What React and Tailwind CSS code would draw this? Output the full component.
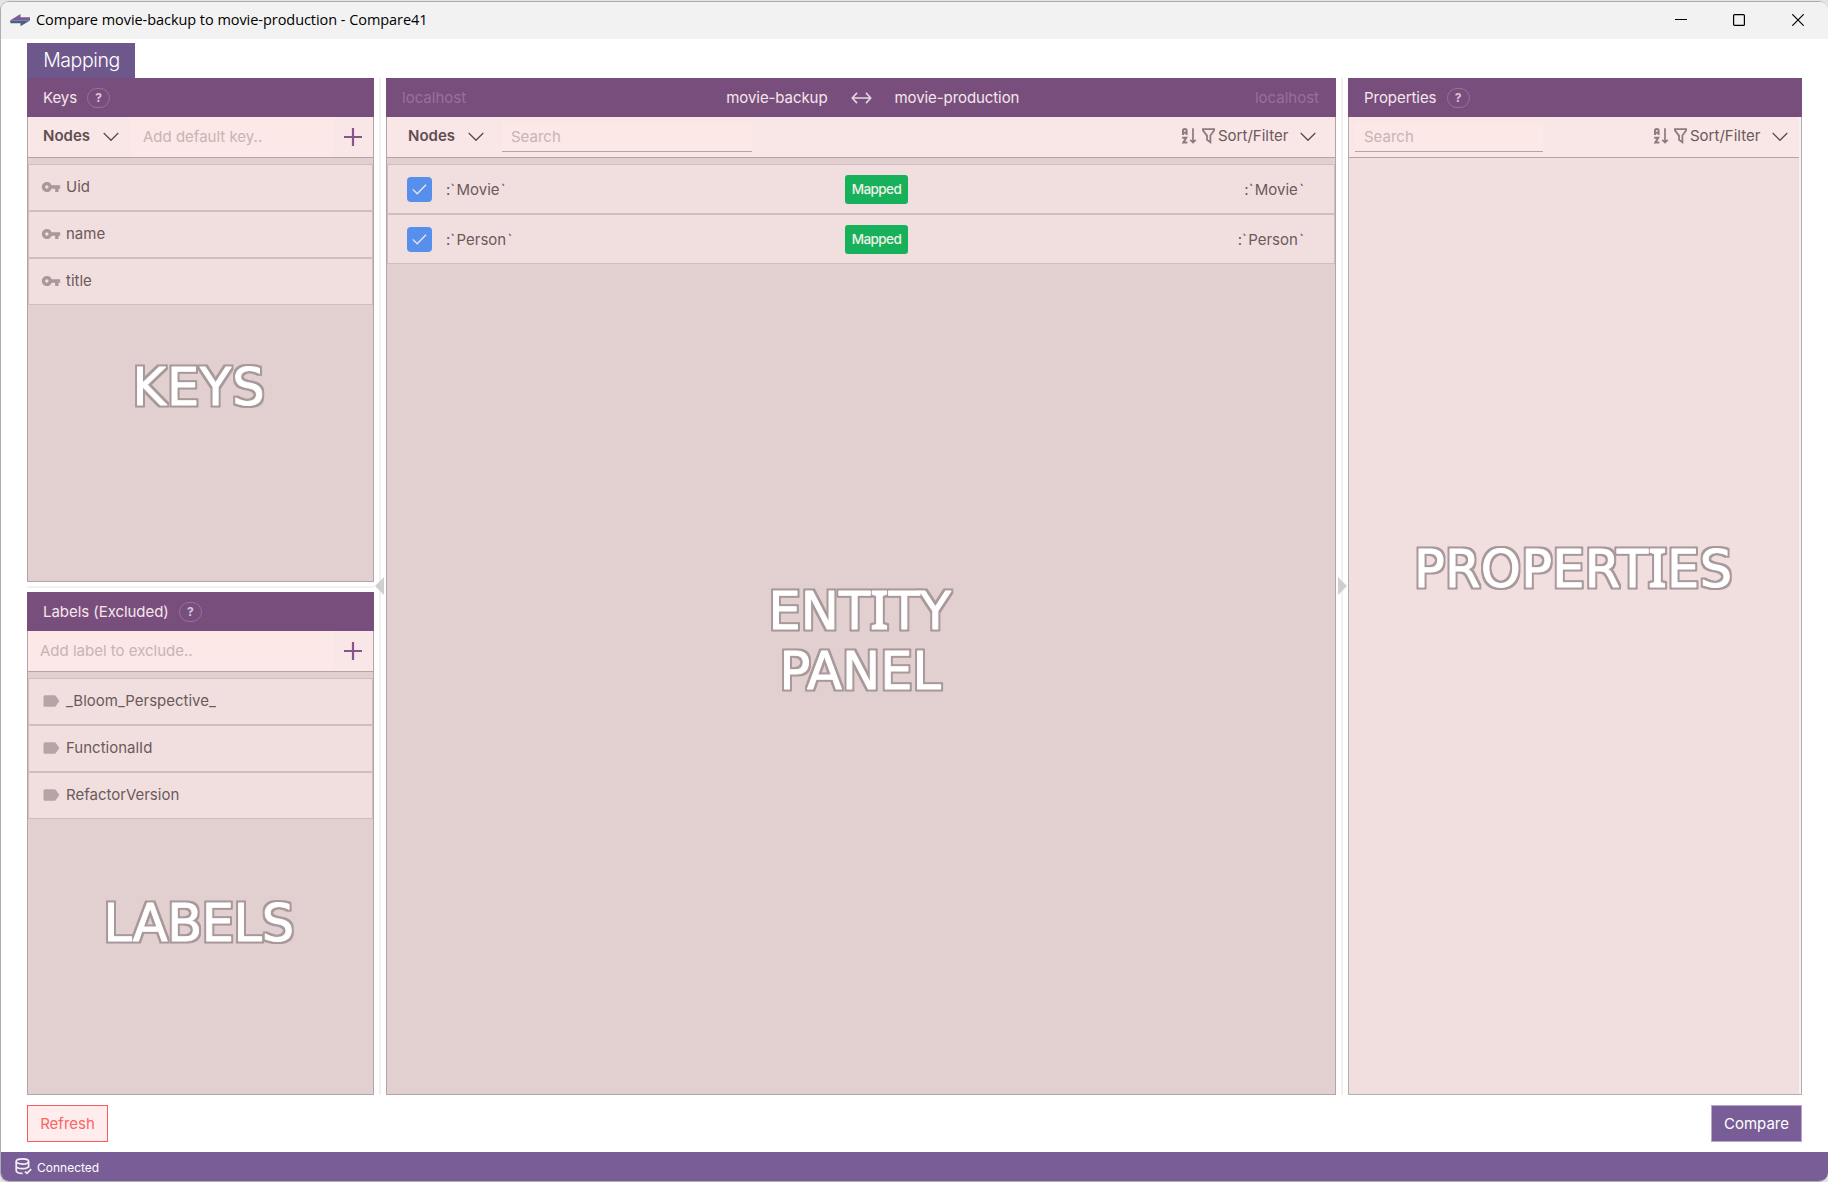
import React from "react";
import { MdVpnKey, MdLabel } from "react-icons/md";

const Chevron = ({ className = "" }) => (
  <svg className={"shrink-0 " + className} width="16" height="10" viewBox="0 0 16 10" fill="none" stroke="#5d4c4e" strokeWidth="1.3">
    <path d="M0.7 1 L8 8.3 L15.3 1" />
  </svg>
);

const Plus = () => (
  <svg width="18" height="18" viewBox="0 0 18 18" fill="none" stroke="#84568c" strokeWidth="2.2">
    <path d="M9 0V18M0 9H18" />
  </svg>
);

const SortIcon = () => (
  <svg width="15" height="16" viewBox="0 0 15 16" fill="none" stroke="#8d7c7e" strokeWidth="2">
    <path d="M1 7V2.6Q1 1 2.800 1T4.600 2.6V7M1 4.800H4.600" />
    <path d="M0.2 9.800H4.200L1.200 14.600H5.400" />
    <path d="M11 0.3V14M8.3 11.900L11 14.600L13.700 11.900" strokeWidth="1.7" />
  </svg>
);

const FunnelIcon = () => (
  <svg width="13" height="16" viewBox="0 0 13 16" fill="none" stroke="#8d7c7e" strokeWidth="1.8">
    <path d="M0.9 1.2H12.1V2.4L8.4 7.6V14.2L5 11.8V7.6L0.9 2.4Z" />
  </svg>
);

const DbIcon = () => (
  <svg width="17" height="17" viewBox="0 0 17 17" fill="none" stroke="#f3eef7" strokeWidth="1.7">
    <ellipse cx="7.4" cy="3.5" rx="6.2" ry="2.6" />
    <path d="M1.2 3.5V12.6C1.2 14.4 3.8 15.4 7.6 15.3M13.6 3.5V9.8M1.2 8C1.2 9.8 4 10.6 7.4 10.6S13.6 9.8 13.6 8" />
    <path d="M10 13.6L12 15.4L16.2 11.2" />
  </svg>
);

const Logo = () => (
  <svg width="20" height="13" viewBox="0 0 20 13">
    <path d="M0 6.500L10.500 0V3.200H20V6.500Z" fill="#775c98" />
    <path d="M0 6.500H20L10.500 12.300V9.300H0.500Z" fill="#4d5f80" />
  </svg>
);

const Help = ({ className = "" }) => (
  <span className={"flex h-5 w-[23px] items-center justify-center rounded-[10px] border border-[#96719c] text-[12px] font-bold text-[#dcc6d8] " + className}>?</span>
);

const Header = ({ title }) => (
  <div className="flex h-[39px] shrink-0 items-center bg-[#784f7c] pl-4 text-[15px] text-[#f6e6ec]">
    <span className="mt-[2px] tracking-[-0.050px]">{title}</span>
    <Help className="ml-[10px]" />
  </div>
);

const SortFilter = ({ className = "" }) => (
  <div className={"flex items-center pb-[2px] text-[#6b595b] " + className}>
    <SortIcon />
    <span className="ml-[5px]"><FunnelIcon /></span>
    <span className="ml-[3px] w-[71px] whitespace-nowrap">Sort/Filter</span>
    <Chevron className="ml-[11px] mt-[1px]" />
  </div>
);

// The capital I is set in a face that gives it serifs.
const Caption = ({ text }) =>
  text.split("I").map((part, i) => (
    <React.Fragment key={i}>
      {i > 0 && <tspan className="font-['Noto_Sans',sans-serif] text-[52px] font-medium">I</tspan>}
      {part}
    </React.Fragment>
  ));

// White caption with a grey rim that runs round the outside of the letters.
const Watermark = ({ lines, className = "" }) => (
  <svg
    className={"block overflow-visible font-['DejaVu_Sans',sans-serif] text-[51px] " + className}
    width="320"
    height={lines.length * 60}
  >
    <filter id="rim" x="-5%" y="-10%" width="110%" height="120%" colorInterpolationFilters="sRGB">
      <feMorphology in="SourceAlpha" operator="dilate" radius="2" result="fat" />
      <feFlood floodColor="#a89899" />
      <feComposite in2="fat" operator="in" />
      <feMerge>
        <feMergeNode />
        <feMergeNode in="SourceGraphic" />
      </feMerge>
    </filter>
    <g filter="url(#rim)" fill="#ffffff" stroke="#ffffff" strokeWidth="0.9" strokeLinejoin="round">
      {lines.map((l, i) => (
        <text key={l.text} x={l.x} y={48 + i * 59.5} textLength={l.length}>
          <Caption text={l.text} />
        </text>
      ))}
    </g>
  </svg>
);

const ListPanel = ({ title, toolbar, items, icon, watermark, className }) => (
  <section className={"flex w-[347px] flex-col " + className}>
    <Header title={title} />
    <div className="flex grow flex-col border-x border-b border-[#b5a4a5] bg-[#e2d0d0]">
      <div className="flex h-[41px] items-center border-b border-[#b5a4a5] bg-[#f9e6e6]">{toolbar}</div>
      <ul className="mt-[6px]">
        {items.map((t) => (
          <li key={t} className="flex h-[47px] items-center border border-[#d0bebf] bg-[#f1dfdf] pl-[12px] text-[#6b595b]">
            <span className="mb-[2px]">{icon}</span>
            <span className="ml-[5px]">{t}</span>
          </li>
        ))}
      </ul>
      {watermark}
    </div>
  </section>
);

const AddButton = () => (
  <button className="flex h-full w-[40px] items-center justify-center"><Plus /></button>
);

const EntityName = ({ name, className = "" }) => (
  <span className={"pt-[2px] " + className}>
    :<span className="tracking-[1.3px]">`</span>{name}<span className="ml-[1.3px]">`</span>
  </span>
);

const EntityRow = ({ name }) => (
  <li className="flex h-[50px] items-center border border-[#d0bebf] bg-[#f1dfdf] pl-[19px] pr-[30px] text-[#6b595b]">
    <span className="flex size-[25px] items-center justify-center rounded-[4px] bg-[#5690ec]">
      <svg width="15" height="11" viewBox="0 0 15 11" fill="none" stroke="#eee3ef" strokeWidth="1.3">
        <path d="M0.8 5.4L5.200 9.800L14 0.800" />
      </svg>
    </span>
    <EntityName className="ml-[14px] w-[399px]" name={name} />
    <span className="mt-[1px] flex h-[29px] w-[63px] items-center justify-center rounded-[3px] bg-[#17b15c] text-[13.500px] font-medium tracking-[-0.6px] text-[#f1f0e6]">Mapped</span>
    <EntityName className="ml-auto" name={name} />
  </li>
);

const Splitter = ({ dir }) => (
  <div className="relative flex w-[12px] justify-center">
    <div className="h-full w-[2px] bg-[#f1f1f1]" />
    {dir === "left" ? (
      <svg className="absolute left-[1px] top-[499px]" width="9" height="18" viewBox="0 0 9 18"><path d="M9 0V18L0 9Z" fill="#cfcfcf" /></svg>
    ) : (
      <svg className="absolute left-[2px] top-[499px]" width="9" height="18" viewBox="0 0 9 18"><path d="M0 0V18L9 9Z" fill="#cfcfcf" /></svg>
    )}
  </div>
);

export default function App() {
  return (
    <div className="h-[1182px] w-[1828px] overflow-hidden bg-[#e4e4e4] pt-px font-['Inter',sans-serif] text-[15px]">
      <div className="flex h-[1181px] flex-col overflow-hidden rounded-[9px] border-y border-l border-[#adadad] bg-white">
        <header className="flex h-[37px] shrink-0 items-center bg-[#f2f2f2] pl-[9px]">
          <Logo />
          <span className="mb-[1px] ml-[6px] font-['Open_Sans',sans-serif] text-[14.500px] tracking-[-0.050px] text-black">
            Compare movie-backup to movie-production - Compare41
          </span>
          <div className="mb-[1px] ml-auto mr-[24px] flex items-center">
            <svg width="12" height="12" viewBox="0 0 12 12"><path d="M0 5.5H12" stroke="#000" /></svg>
            <svg className="ml-[46px] mr-[47px]" width="12" height="12" viewBox="0 0 12 12"><rect x="0.6" y="0.6" width="10.800" height="10.800" rx="1" fill="none" stroke="#000" strokeWidth="1.2" /></svg>
            <svg width="12" height="12" viewBox="0 0 12 12"><path d="M0.300 0.300L11.700 11.700M11.700 0.300L0.300 11.700" stroke="#000" strokeWidth="1.200" /></svg>
          </div>
        </header>

        <div className="ml-[26px] mt-[4px] flex h-[35px] w-[108px] shrink-0 items-center justify-center bg-[#6d578b] pl-px pt-[1px] text-[19.500px] font-light tracking-[-0.400px] text-white">
          Mapping
        </div>

        <main className="ml-[26px] flex h-[1017px] shrink-0">
          <div className="flex w-[347px] flex-col">
            <ListPanel
              className="h-[504px]"
              title="Keys"
              items={["Uid", "name", "title"]}
              icon={<MdVpnKey size={20} color="#a99899" />}
              watermark={<Watermark className="ml-[104px] mt-[52px] w-[140px]" lines={[{ text: "KEYS", x: 0.5, length: 132 }]} />}
              toolbar={
                <>
                  <span className="ml-[15px] w-[46px] pb-[2px] font-semibold text-[#5f4e50]">Nodes</span>
                  <Chevron className="ml-[14px]" />
                  <div className="ml-[12px] flex h-full w-[202px] items-center bg-[#fbe8e7] pl-[12px] text-[#c9b3b4]">Add default key..</div>
                  <AddButton />
                </>
              }
            />
            <div className="my-[4px] h-[2px] shrink-0 bg-[#f1f1f1]" />
            <ListPanel
              className="h-[503px]"
              title="Labels (Excluded)"
              items={["_Bloom_Perspective_", "FunctionalId", "RefactorVersion"]}
              icon={<MdLabel size={20} color="#b6a5a6" />}
              watermark={<Watermark className="ml-[75px] mt-[74px] w-[200px]" lines={[{ text: "LABELS", x: 0.5, length: 190.5 }]} />}
              toolbar={
                <>
                  <div className="flex h-full w-[305px] items-center bg-[#fbe8e7] pl-[12px] text-[#c9b3b4]">Add label to exclude..</div>
                  <AddButton />
                </>
              }
            />
          </div>

          <Splitter dir="left" />

          <section className="flex w-[950px] flex-col">
            <div className="grid h-[39px] shrink-0 grid-cols-[1fr_auto_1fr] items-center bg-[#784f7c] px-4 text-[#96719c]">
              <div className="flex justify-between pt-[2px]">
                <span>localhost</span>
                <span className="tracking-[-0.080px] text-[#f6e6ec]">movie-backup</span>
              </div>
              <svg className="mx-[23px]" width="21" height="12" viewBox="0 0 21 12" fill="none" stroke="#e6d3df" strokeWidth="1.6">
                <path d="M1.300 6H19.700M6 0.900L1.300 6L6 11.100M15 0.900L19.700 6L15 11.100" />
              </svg>
              <div className="flex justify-between pt-[2px]">
                <span className="tracking-[-0.080px] text-[#f6e6ec]">movie-production</span>
                <span className="mr-[1px]">localhost</span>
              </div>
            </div>
            <div className="grow border-x border-b border-[#b5a4a5] bg-[#e2d0d0]">
              <div className="flex h-[41px] items-center border-b border-[#b5a4a5] bg-[#f9e6e6]">
                <span className="ml-[21px] w-[46px] pb-[2px] font-semibold text-[#5f4e50]">Nodes</span>
                <Chevron className="ml-[14px]" />
                <div className="ml-[18px] flex h-[30px] w-[250px] items-center border-b border-[#b5a4a5] bg-[#fbe8e7] pl-[9px] pt-[2px] text-[#c9b3b4]">Search</div>
                <SortFilter className="ml-auto mr-[19px]" />
              </div>
              <ul className="mt-[6px]">
                <EntityRow name="Movie" />
                <EntityRow name="Person" />
              </ul>
              <Watermark
                className="ml-[381px] mt-[317px]"
                lines={[
                  { text: "ENTITY", x: 0.5, length: 182.5 },
                  { text: "PANEL", x: 11.5, length: 161.5 },
                ]}
              />
            </div>
          </section>

          <Splitter dir="right" />

          <section className="flex w-[454px] flex-col">
            <Header title="Properties" />
            <div className="grow border-x border-b border-[#b3adad] bg-[#f3f1f1] pr-[2px]">
              <div className="h-full bg-[#f1dfdf]">
                <div className="flex h-[41px] items-center border-b border-[#b5a4a5] bg-[#f9e6e6]">
                  <div className="ml-[6px] flex h-[30px] w-[188px] items-center border-b border-[#b5a4a5] bg-[#fbe8e7] pl-[9px] pt-[2px] text-[#c9b3b4]">Search</div>
                  <SortFilter className="ml-auto mr-[11px]" />
                </div>
                <Watermark className="ml-[64px] mt-[381px]" lines={[{ text: "PROPERTIES", x: 1, length: 318 }]} />
              </div>
            </div>
          </section>
        </main>

        <div className="ml-[26px] mr-[26px] mt-[10px] flex h-[37px] shrink-0 justify-between">
          <button className="w-[81px] border border-[#f95c5c] bg-[#ffeded] pt-[2px] text-[#fb6464]">Refresh</button>
          <button className="w-[91px] border border-[#b9a5cd] bg-[#785d96] pt-[2px] text-white">Compare</button>
        </div>

        <footer className="mt-[10px] flex grow items-center bg-[#785d96] pl-[14px] text-[12px] text-white">
          <DbIcon />
          <span className="ml-[5px] mt-[3px]">Connected</span>
        </footer>
      </div>
    </div>
  );
}
